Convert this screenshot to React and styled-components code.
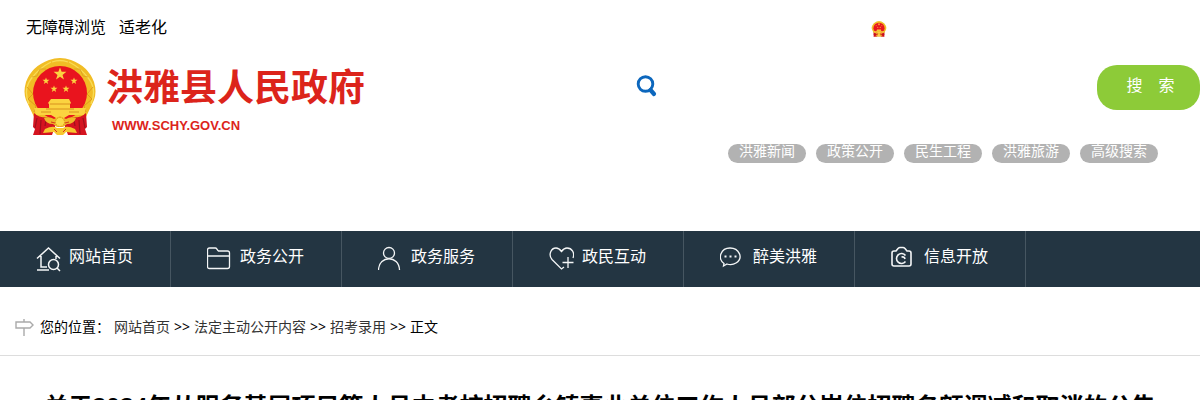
import React from "react";
import styled, { createGlobalStyle } from "styled-components";

const GlobalStyle = createGlobalStyle`
  * { box-sizing: border-box; }
  body {
    margin: 0;
    background: #fff;
    color: #000;
    font-family: "Noto Sans", "Noto Sans CJK SC", sans-serif;
    font-size: 14px;
  }
  a { color: inherit; text-decoration: none; }
`;

const TopBar = styled.div`
  display: flex;
  align-items: center;
  height: 56px;
  padding: 2px 312px 0 26px;
`;

const TopLinks = styled.div`
  display: flex;
  flex: 1;
  gap: 13px;
  padding-bottom: 4px;
  font-size: 16px;
  line-height: 24px;
`;

const Header = styled.header`
  display: flex;
  justify-content: space-between;
  padding-left: 24px;
  height: 175px;
`;

const Brand = styled.a`
  display: flex;
  align-items: flex-start;
  gap: 10px;
  padding-top: 2px;
  color: #dc241b;
`;

const BrandText = styled.div`
  display: flex;
  flex-direction: column;
`;

const BrandName = styled.strong`
  font-size: 37px;
  line-height: 58px;
  white-space: nowrap;
`;

const BrandUrl = styled.span`
  padding-left: 6px;
  font-family: "Liberation Sans", sans-serif;
  font-size: 13px;
  font-weight: bold;
  line-height: 20px;
`;

const SearchArea = styled.div`
  width: 48%;
  padding-top: 9px;
`;

const SearchForm = styled.form`
  display: flex;
  align-items: center;
  height: 45px;
`;

const SearchLabel = styled.label`
  display: flex;
  padding-bottom: 4px;
`;

const SearchInput = styled.input`
  flex: 1;
  min-width: 0;
  height: 44px;
  padding: 0 12px;
  border: 0;
  outline: 0;
  background: transparent;
  font: inherit;
`;

const SearchButton = styled.button`
  width: 103px;
  height: 45px;
  padding: 0 0 6px 4px;
  border: 0;
  border-radius: 20px;
  background: #8dcb38;
  color: #fff;
  font-family: inherit;
  font-size: 16px;
  line-height: 24px;
  white-space: pre;
`;

const QuickLinks = styled.div`
  display: flex;
  justify-content: flex-end;
  gap: 10px;
  padding: 34px 42px 0 0;
`;

const QuickLink = styled.a`
  width: 78px;
  height: 19px;
  border-radius: 10px;
  background: #b2b2b2;
  color: #fff;
  font-size: 14px;
  line-height: 14px;
  text-align: center;
`;

const Nav = styled.nav`
  display: flex;
  height: 56px;
  background: #233542;
`;

const NavItem = styled.a`
  display: flex;
  align-items: center;
  gap: 8px;
  width: 171px;
  padding: 0 0 6px 36px;
  border-right: 1px solid #465661;
  color: #fff;
  font-size: 16px;
  line-height: 24px;
`;

const NavIcon = styled.svg`
  width: 25px;
  height: 26px;
  margin-top: 6px;
  fill: none;
  stroke: #f4f6f7;
  stroke-width: ${(p) => p.$weight || 1.3};
`;

const Crumbs = styled.div`
  display: flex;
  align-items: center;
  height: 69px;
  padding: 12px 15px 0;
  border-bottom: 1px solid #ddd;
  line-height: 24px;
`;

const CrumbLabel = styled.span`
  margin: 0 4px 0 6px;
`;

const CrumbLink = styled.a`
  color: #333;
`;

const Separator = styled.span`
  margin: 0 4px;
`;

const Title = styled.h1`
  margin: 32px 0 0;
  font-size: 24px;
  line-height: 36px;
  text-align: center;
  white-space: nowrap;
`;

const STAR = "0,-6 1.5,-2 5.8,-2 2.3,.8 3.6,5 0,2.5 -3.6,5 -2.3,.8 -5.8,-2 -1.5,-2";

function Emblem({ width, height }) {
  return (
    <svg width={width} height={height} viewBox="0 0 72 78" aria-hidden="true">
      <path d="M11 61 2 42Q-1 34 2 24 8 8 25 2q11-4 22 0 17 6 23 22 3 10 0 18l-9 19Z" fill="#f1bd25" />
      <g stroke="#f8dc56" strokeWidth="1.3" fill="none">
        <path d="M5 46Q-1 32 7 21T27 4M67 46q6-14-2-25T45 4M28 4q8-3 16 0" />
        <path d="m3 29 6 7-5 5 8 7-2 6M69 29l-6 7 5 5-8 7 2 6" stroke="#d99318" strokeWidth=".8" />
        <path d="m8 19 5-1 3-7 6 0M64 19l-5-1-3-7-6 0" stroke="#da9c20" strokeWidth=".8" />
      </g>
      <circle cx="36" cy="35" r="27" fill="#e9141e" />
      <g fill="#fbd340">
        <polygon points={STAR} transform="translate(36 16) scale(1.1)" />
        <polygon points={STAR} transform="translate(22 23) scale(.6)" />
        <polygon points={STAR} transform="translate(50 23) scale(.6)" />
        <polygon points={STAR} transform="translate(30 31) scale(.6)" />
        <polygon points={STAR} transform="translate(42 31) scale(.6)" />
        <path d="M27 41h18l2 4-1 1v4h5v3H21v-3h4v-4l-1-1Z" />
        <path d="M10 50h52l-2 7H45l-5 3h-8l-5-3H12Z" />
      </g>
      <path d="M26 46h20M22 51h28M17 54h10m18 0h10" stroke="#d8911e" />
      <path d="M10 55q6 6 18 4l4 7-4 11H9l2-6-2-2Zm52 0q-6 6-18 4l-4 7 4 11h19l-2-6 2-2Z" fill="#d51420" />
      <path d="m13 60-2 10m6-8-1 14m6-14-1 6M59 60l2 10m-6-8 1 14m-6-14 1 6" stroke="#9e101c" strokeWidth="1.2" />
      <path d="M20 60q6-2 10 1l6-3 6 3q4-3 10-1-2 6-9 6l-4 3h-6l-4-3q-7 0-9-6Z" fill="#f0b928" />
      <path d="M21 71q8-4 12-1h6q4-3 12 1l2 4-11-1-3 3h-6l-3-3-11 1Z" fill="#f7c72e" />
      <circle cx="36" cy="64" r="4.5" fill="#fbdc4a" stroke="#dc911a" strokeDasharray="1.5 1" />
      <path d="m27 64 4 1m14-1-4 1M30 71l3 3m9-3-3 3" stroke="#d7321d" />
    </svg>
  );
}

const NAV = [
  {
    text: "网站首页",
    weight: 1.5,
    icon: <path d="M1 12.5 12.5 2 24 12.5M5 10v11h6M1 24h12M20 10v3M22.500 18.500a5 5 0 1 1-10 0 5 5 0 0 1 10 0M21 22l3 3" />,
  },
  {
    text: "政务公开",
    icon: <path d="M0.500 20.500V4q0-2 2-2h6q1 0 2 2l1 1h9q2 0 2 2v13.500q0 2-2 2h-18q-2 0-2-2M0.500 10h22" />,
  },
  {
    text: "政务服务",
    icon: (
      <>
        <circle cx="11" cy="7" r="5.500" />
        <path d="M0.500 24C1 9 21 9 21.500 24" />
      </>
    ),
  },
  {
    text: "政民互动",
    icon: <path d="M15 21l-2.500 2L3 13.500C-1 9 2 2 7 2q3 0 5.500 3.500Q15 2 18 2c5 0 8 5 6 10M19 11v11M13.500 16.500h11" />,
  },
  {
    text: "醉美洪雅",
    icon: (
      <>
        <path d="M4 17.500C-3 12 1 2 10 2s14 10 6 15q-4 2.500-9 1l-3.500 2Z" />
        <path d="M4.500 10.500h2m3 0h2m3 0h2" strokeWidth="2" />
      </>
    ),
  },
  {
    text: "信息开放",
    weight: 1.6,
    icon: (
      <>
        <path d="M5 5 7 2.500q1-1 2-1h3q1 0 2 1L16 5h2q2 0 2 2v11q0 2-2 2H3q-2 0-2-2V7q0-2 2-2Z" />
        <path d="M14.500 9.500a5 5 0 1 0 0 6M10.500 11q3-.5 3.500 2" />
      </>
    ),
  },
];

const QUICK = ["洪雅新闻", "政策公开", "民生工程", "洪雅旅游", "高级搜索"];
const TRAIL = ["网站首页", "法定主动公开内容", "招考录用"];

export default function App() {
  return (
    <>
      <GlobalStyle />
      <TopBar>
        <TopLinks>
          <a href="#accessible">无障碍浏览</a>
          <a href="#senior">适老化</a>
        </TopLinks>
        <Emblem width="18" height="16" />
      </TopBar>
      <Header>
        <Brand href="#home">
          <Emblem width="72" height="78" />
          <BrandText>
            <BrandName>洪雅县人民政府</BrandName>
            <BrandUrl>WWW.SCHY.GOV.CN</BrandUrl>
          </BrandText>
        </Brand>
        <SearchArea>
          <SearchForm onSubmit={(e) => e.preventDefault()}>
            <SearchLabel htmlFor="keyword" aria-label="搜索">
              <svg width="21" height="22" viewBox="0 0 21 22" fill="none" stroke="#0c67bd" aria-hidden="true">
                <circle cx="9.500" cy="9" r="7.300" strokeWidth="2.900" />
                <path d="m14.500 15 3.500 4" strokeWidth="4.200" strokeLinecap="round" />
              </svg>
            </SearchLabel>
            <SearchInput id="keyword" type="text" />
            <SearchButton type="submit">{"搜\u2003索"}</SearchButton>
          </SearchForm>
          <QuickLinks>
            {QUICK.map((text) => (
              <QuickLink key={text} href="#quick">{text}</QuickLink>
            ))}
          </QuickLinks>
        </SearchArea>
      </Header>
      <Nav>
        {NAV.map(({ text, icon, weight }) => (
          <NavItem key={text} href="#nav">
            <NavIcon viewBox="0 0 25 26" $weight={weight} aria-hidden="true">{icon}</NavIcon>
            {text}
          </NavItem>
        ))}
      </Nav>
      <Crumbs>
        <svg width="19" height="18" viewBox="0 0 19 18" fill="none" stroke="#aaa" strokeWidth="1.400" aria-hidden="true">
          <path d="M1 4h14l3 3-3 3H1ZM9 1v3M9 10v8" />
        </svg>
        <CrumbLabel>您的位置：</CrumbLabel>
        {TRAIL.map((text) => (
          <React.Fragment key={text}>
            <CrumbLink href="#trail">{text}</CrumbLink>
            <Separator>&gt;&gt;</Separator>
          </React.Fragment>
        ))}
        <span>正文</span>
      </Crumbs>
      <Title>关于2024年从服务基层项目等人员中考核招聘乡镇事业单位工作人员部分岗位招聘名额调减和取消的公告</Title>
    </>
  );
}
